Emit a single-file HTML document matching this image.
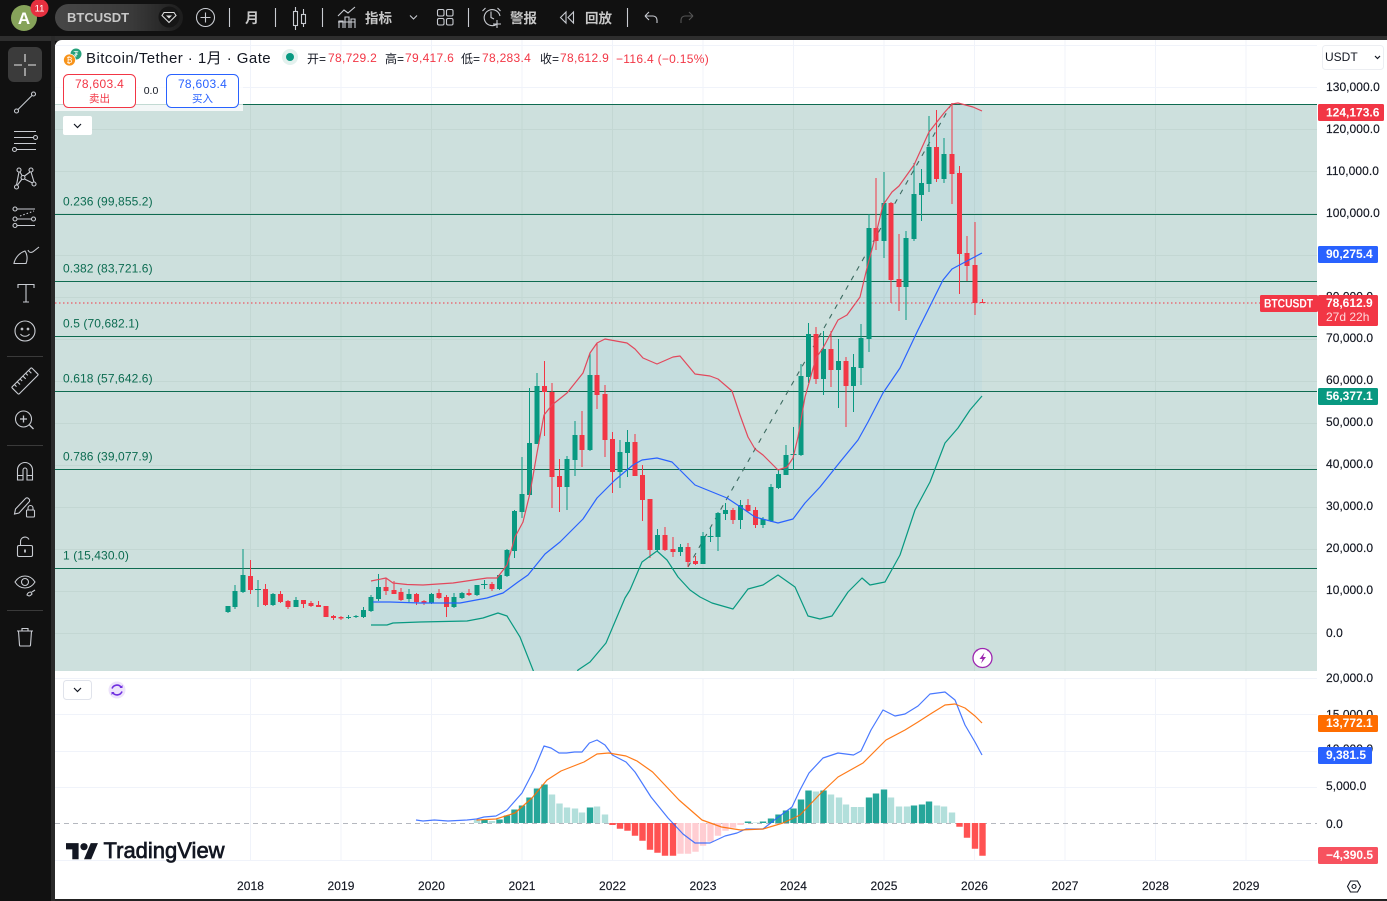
<!DOCTYPE html>
<html lang="zh"><head><meta charset="utf-8"><title>BTCUSDT</title>
<style>
html,body{margin:0;padding:0;background:#111;width:1387px;height:901px;overflow:hidden}
svg{display:block}
text{font-family:"Liberation Sans","Noto Sans CJK SC",sans-serif}
.ax text{font-size:12px;fill:#131722;letter-spacing:.05px;stroke:#131722;stroke-width:.15}
.fib text{font-size:12px;fill:#0b6b50;letter-spacing:.1px}
.tag text{font-size:12px;font-weight:bold;fill:#fff}
.ic{fill:none;stroke:#c9ccd2;stroke-width:1.1}
.top{font-size:13px;font-weight:bold;fill:#c8c8c8}
.ohlc{font-size:12px;letter-spacing:.3px;fill:#f23645}
.lb{font-size:12px;fill:#131722}
</style></head><body>
<svg width="1387" height="901" viewBox="0 0 1387 901" xmlns="http://www.w3.org/2000/svg">
<rect width="1387" height="901" fill="#111"/>
<rect y="36" width="1387" height="5" fill="#2e2e2e"/>
<rect x="51" y="36" width="4" height="865" fill="#2a2a2a"/>
<path d="M62 40H1387V901H55V47a7 7 0 0 1 7-7Z" fill="#fff"/>

<!-- white-zone grid -->
<path d="M250.5 40V104M341 40V104M431.5 40V104M522 40V104M612.5 40V104M703 40V104M793.5 40V104M884 40V104M974.5 40V104M1065 40V104M1155.5 40V104M1246 40V104M55 45.500H1317M55 87.500H1317" stroke="#f0f3fa" fill="none"/>
<!-- fib background -->
<rect x="55" y="104" width="1262" height="567" fill="#cde0dd"/>
<path d="M371 581L386 578 393 583 407 584.5 423 585 453 583 487 578 497 578 507 565 515 537 523 522 530 493 537 453 544 415 552 405 567 393 583 373 590 353 597 343 605 339 627 343 635 349 643 358 657 364 673 357 680 356 695 374 710 376 718 379 732 391 740 415 748 437 755 449 763 455 778 470 787 467 793 458 798 437 805 397 816 358 823 348 838 320 847 315 860 297 867 268 875 238 883 205 892 192 899 186 914 165 929 132 944 113 952 104 958 103 973 107 982 111V396L970 410 958 428 945 443 930 482 915 510 900 555 885 582 870 585 862 578 848 592 832 616 820 619 808 616 795 587 778 575 763 585 748 589 733 609 712 603 700 597 690 590 678 577 667 560 657 551 642 562 630 590 625 598 606 643 590 662 578 670H533L520 637 507 616 498 613 483 618 467 621 420 622 393 623 387 625 371 625Z" fill="#2196f3" fill-opacity=".04"/>

<!-- grid -->
<path d="M250.5 104V671M341 104V671M431.5 104V671M522 104V671M612.5 104V671M703 104V671M793.5 104V671M884 104V671M974.5 104V671M1065 104V671M1155.5 104V671M1246 104V671M55 129.5H1317M55 171.5H1317M55 213.5H1317M55 255.5H1317M55 297.5H1317M55 339.5H1317M55 381.5H1317M55 423.5H1317M55 465.5H1317M55 507.5H1317M55 549.5H1317M55 591.5H1317M55 633.5H1317" stroke="#8aa09c" stroke-opacity=".14" fill="none"/>

<!-- fib lines -->
<path d="M55 104.5H1317M55 214.5H1317M55 281.5H1317M55 336.5H1317M55 391.5H1317M55 469.5H1317M55 568.5H1317" stroke="#0e6b50" stroke-width="1" fill="none"/>
<g class="fib">
<text x="63" y="205.5">0.236 (99,855.2)</text>
<text x="63" y="272.5">0.382 (83,721.6)</text>
<text x="63" y="327.5">0.5 (70,682.1)</text>
<text x="63" y="382.5">0.618 (57,642.6)</text>
<text x="63" y="460.5">0.786 (39,077.9)</text>
<text x="63" y="559.5">1 (15,430.0)</text>
</g>

<!-- dashed diagonal -->
<path d="M688 567L952 103" stroke="#3c6a60" stroke-width="1.1" stroke-dasharray="5 6" fill="none"/>
<!-- price line -->
<path d="M55 303H1260" stroke="#f23645" stroke-dasharray="1.5 2.5" fill="none"/>

<!-- candles wicks green -->
<path fill="none" stroke="#089981" stroke-width="1" d="M228 606V613M235 585V609M243 549V593M258 580V607M273 593V606M296 597V607M348.5 615V619M356 615V618M363.5 607V618M371 595V612M378.5 574V601M409 589V602M431.5 593V604M454 593V608M462 592V599M477 585V596M484.5 580V589M499.5 574V590M507 549V577M514.5 510V558M522 457V518M529.5 388V495M537 373V444M567 456V510M575 421V476M590 353V451M620 440V488M627.5 430V477M657.5 529V552M680.5 544V556M703 532V564M710.5 527V542M718 512V551M725.5 503V520M740.5 500V529M763 517V528M771 484V522M778.5 470V489M786 445V475M793.5 427V470M801 364V456M808.5 323V383M823.5 331V395M838.5 339V408M853.5 354V412M861 324V385M869 214V352M884 172V258M906 231V320M914 163V241M921.5 169V221M929 116V192M944 138V183"/>
<!-- candles wicks red -->
<path fill="none" stroke="#f23645" stroke-width="1" d="M250.5 560V594M265.5 584V606M280.5 591V603M288 600V609M303.5 600V608M311 601V607M318.5 601V607M326 606V617M333.5 615V620M341 616V620M386 578V595M394 581V594M401 588V601M416.5 593V605M424 600V605M439 589V599M446.5 595V617M469 589V596M492 582V591M544.5 361V436M552 383V508M559.5 459V512M582 411V467M597 343V409M605 385V457M612.5 432V493M635 434V476M642.5 465V521M650 499V558M665 527V551M673 537V557M688 543V567M695.5 556V565M733 508V524M748 499V512M755.5 507V528M816 327V384M831 331V387M846 357V427M876 178V250M891 202V303M899 234V311M936.5 110V182M952 103V204M959.5 166V294M967 236V281M975 222V315M982.5 299V303"/>
<!-- candle bodies green -->
<path fill="none" stroke="#089981" stroke-width="5" d="M228 606V612M235 591V607M243 575V592M273 594V605M296 600V607M363.5 610V617M371 597V611M378.5 587V599M409 594V599M431.5 594V603M454 597V607M462 593V598M477 585V595M499.5 575V589M507 550V576M514.5 511V551M522 494V512M529.5 443V495M537 386V444M567 459V487M575 435V460M590 375V450M620 452V472M627.5 442V453M657.5 535V550M680.5 547V552M703 536V564M718 513V537M725.5 510V514M740.5 505V520M763 519V525M771 487V521M778.5 474V488M786 455V475M801 376V455M808.5 334V377M823.5 349V379M838.5 361V370M853.5 367V386M861 338V368M869 228V339M884 203V241M906 238V287M914 194V239M921.5 183V195M929 147V184M944 154V179M348.5 617V618M356 616V617"/>
<path fill="none" stroke="#089981" stroke-width="1" d="M255 589.5H261M707.5 536.5H713.5M481 584.5H487.5M790.5 454.5H796.5"/>
<!-- candle bodies red -->
<path fill="none" stroke="#f23645" stroke-width="5" d="M250.5 576V590M265.5 589V605M280.5 594V602M288 601V607M303.5 600V604M311 603V606M318.5 605V607M326 606V617M333.5 616V618M341 617V618.5M386 587V591M394 590V594M401 592V600M416.5 594V602M424 601V603M439 593V598M446.5 597V607M469 593V595M492 584V589M544.5 386V392M552 392V477M559.5 476V487M582 435V450M597 375V395M605 394V440M612.5 439V472M635 442V476M642.5 475V500M650 499V550M665 535V550M673 549V552M688 547V562M695.5 561V564M733 510V520M748 505V511M755.5 510V525M816 334V379M831 349V370M846 361V386M876 228V241M891 203V280M899 279V287M936.5 147V179M952 154V174M959.5 173V254M967 253V266M975 265V303"/>
<path fill="none" stroke="#f23645" stroke-width="1" d="M980 302.5H985.5"/>

<!-- Bollinger lines -->
<path fill="none" stroke="#e2485c" stroke-width="1.2" stroke-linejoin="round" d="M371 581L386 578 393 583 407 584.5 423 585 453 583 487 578 497 578 507 565 515 537 523 522 530 493 537 453 544 415 552 405 567 393 583 373 590 353 597 343 605 339 627 343 635 349 643 358 657 364 673 357 680 356 695 374 710 376 718 379 732 391 740 415 748 437 755 449 763 455 778 470 787 467 793 458 798 437 805 397 816 358 823 348 838 320 847 315 860 297 867 268 875 238 883 205 892 192 899 186 914 165 929 132 944 113 952 104 958 103 973 107 982 111"/>
<path fill="none" stroke="#2962ff" stroke-width="1.2" stroke-linejoin="round" d="M373 602L390 602 420 603 460 603 487 598 503 593 518 582 528 575 545 554 560 542 583 519 597 498 615 480 633 465 642 460 657 458 672 462 682 472 695 485 727 498 742 508 755 517 778 523 793 519 805 503 820 487 840 462 858 440 868 422 883 393 900 368 918 330 943 280 952 269 982 253"/>
<path fill="none" stroke="#089981" stroke-width="1.2" stroke-linejoin="round" d="M371 625L387 625 393 623 420 622 467 621 483 618 498 613 507 616 520 637 533 670 545 700M565 700L578 670 590 662 606 643 625 598 630 590 642 562 657 551 667 560 678 577 690 590 700 597 712 603 733 609 748 589 763 585 778 575 795 587 808 616 820 619 832 616 848 592 862 578 870 585 885 582 900 555 915 510 930 482 945 443 958 428 970 410 982 396"/>

<!-- chart top overlays -->
<rect x="55" y="75" width="188" height="36" fill="#fff" fill-opacity=".75"/>
<rect x="63.5" y="74.5" width="72" height="33" rx="5" fill="#fff" stroke="#f23645"/>
<rect x="166.5" y="74.5" width="72" height="33" rx="5" fill="#fff" stroke="#2962ff"/>
<text x="99.5" y="88" text-anchor="middle" style="font-size:12px;fill:#f23645;letter-spacing:.3px">78,603.4</text>
<text x="99.5" y="102" text-anchor="middle" style="font-size:10.5px;fill:#f23645">卖出</text>
<text x="202.5" y="88" text-anchor="middle" style="font-size:12px;fill:#2962ff;letter-spacing:.3px">78,603.4</text>
<text x="202.5" y="102" text-anchor="middle" style="font-size:10.5px;fill:#2962ff">买入</text>
<text x="151" y="94" text-anchor="middle" style="font-size:10.5px;fill:#131722">0.0</text>

<rect x="63" y="116" width="29" height="19" rx="2" fill="#fff"/>
<path d="M74 124l3.5 3.5 3.5-3.5" fill="none" stroke="#131722" stroke-width="1.2"/>

<!-- legend -->
<circle cx="76" cy="54" r="5.5" fill="#26a17b"/>
<text x="76" y="57" text-anchor="middle" style="font-size:8px;fill:#fff">₮</text>
<circle cx="69.5" cy="60" r="6" fill="#f7931a" stroke="#fff" stroke-width=".7"/>
<text x="69.5" y="63" text-anchor="middle" style="font-size:8px;fill:#fff">₿</text>
<text x="86" y="63" style="font-size:15px;fill:#131722;letter-spacing:.45px">Bitcoin/Tether · 1月 · Gate</text>
<circle cx="290" cy="57" r="8" fill="#e3f1ee"/><circle cx="290" cy="57" r="4" fill="#089981"/>
<text x="307" y="63" class="lb">开=</text><text x="328" y="62" class="ohlc">78,729.2</text>
<text x="385" y="63" class="lb">高=</text><text x="405" y="62" class="ohlc">79,417.6</text>
<text x="461" y="63" class="lb">低=</text><text x="482" y="62" class="ohlc">78,283.4</text>
<text x="540" y="63" class="lb">收=</text><text x="560" y="62" class="ohlc">78,612.9</text>
<text x="616" y="63" class="ohlc">−116.4 (−0.15%)</text>

<!-- lightning -->
<circle cx="982.5" cy="658" r="9.5" fill="#fff" stroke="#9c27b0" stroke-width="1.3"/>
<path d="M984.5 652.5l-5 6.5h3l-1.5 4.5 5-6.5h-3Z" fill="#9c27b0"/>
<path d="M976 650l1.5 1M989 650l-1.5 1" stroke="#9c27b0" fill="none"/>

<!-- MACD pane -->
<rect x="55" y="671" width="1262" height="190" fill="#fff"/>
<path d="M250.5 679V860M341 679V860M431.5 679V860M522 679V860M612.5 679V860M703 679V860M793.5 679V860M884 679V860M974.5 679V860M1065 679V860M1155.5 679V860M1246 679V860M55 678.5H1317M55 714.5H1317M55 751.5H1317M55 787.5H1317M55 860.5H1317" stroke="#f0f3fa" fill="none"/>
<path d="M55 823.5H1317" stroke="#b5b8bf" stroke-dasharray="5 4" fill="none"/>
<rect x="63.5" y="680.5" width="28" height="19" rx="3" fill="#fff" stroke="#e0e3eb"/>
<path d="M74 688l3.5 3.5 3.5-3.5" fill="none" stroke="#131722" stroke-width="1.2"/>
<circle cx="117" cy="690" r="8.5" fill="#ede3fb"/>
<path d="M112 688.5a5.3 5.3 0 0 1 9-1.5M122 691.5a5.3 5.3 0 0 1-9 1.5" fill="none" stroke="#6f2fe0" stroke-width="1.6"/>
<path d="M122.5 685v3h-3ZM111.5 695v-3h3Z" fill="#6f2fe0"/>

<!-- histogram pale green -->
<path fill="none" stroke="#b2dfdb" stroke-width="6.4" d="M477 823V820M492 823V821M552 823V794.5M559.5 823V803.5M567 823V807.5M575 823V808.5M582 823V812.5M597 823V806.5M605 823V814.5M756 823V822.5M816 823V791.5M831 823V794.5M839 823V797.5M846 823V804.5M854 823V807M861 823V807M891 823V797.5M899 823V806.5M907 823V806.5M937 823V805.5M944 823V806.5M952 823V812.5"/>
<!-- dark green -->
<path fill="none" stroke="#26a69a" stroke-width="6.4" d="M484.5 823V820M499.5 823V819.5M507 823V815.5M514.5 823V809.5M522 823V805.5M529.5 823V797.5M537 823V788.5M544.5 823V784.5M590 823V807.5M748 823V821.5M763 823V821.5M771 823V818.5M778.5 823V814.5M786 823V810.5M793.5 823V808.5M801 823V799.5M808.5 823V790.5M823.5 823V790.5M869 823V797.5M876 823V793.5M884 823V789.5M914 823V805.5M922 823V804.5M929 823V801.5"/>
<!-- red -->
<path fill="none" stroke="#ff5252" stroke-width="6.4" d="M612.5 823V825M620 823V828.7M627.5 823V830.7M635 823V835.7M642.5 823V840.7M650 823V849.7M657.5 823V852.7M665 823V855.7M673 823V855.7M959.5 823V826.7M967 823V837.7M975 823V848.7M982.5 823V855.7"/>
<!-- pale red -->
<path fill="none" stroke="#ffcdd2" stroke-width="6.4" d="M680.5 823V853.7M688 823V853.7M695.5 823V851.7M703 823V845.7M710.5 823V841.7M718 823V835.7M725.5 823V830.7M733 823V827.7M740.5 823V825"/>
<!-- MACD lines -->
<path fill="none" stroke="#2962ff" stroke-width="1.2" stroke-opacity=".85" stroke-linejoin="round" d="M416 820L423 821 434.4 820 448 821 467 820 476.5 819 484 817 496 816 507 810 522 793 534 770 544 746 551 748 559 753 566.5 753 574.5 752 582 752 589.4 743 597 740 605 745 612.4 755 626 762 635 772 651 797 668 818 683 834 695 843 710 843 725 836 737 833 746 829 763 829 777 818 792 807 800 790 809 773 823 758 838 753 853.5 755 861 751 871 730 883 710 895 716 905 714 918 706 930 694 945 692 955 700 965 725 975 742 982 755"/>
<path fill="none" stroke="#ff6d00" stroke-width="1.2" stroke-opacity=".9" stroke-linejoin="round" d="M476.5 820L496 819 515 813 532 798 547 780 561 771 584 762 597 754 608.6 753 626 756 637 761 652.6 772 679 800 702 820 721.5 827 740.6 830 763 829 783 823 800 815 821 793 838 777 863 763 886 740 905 730 918 722 932 713 945 705 955 704 965 708 975 716 982 723"/>

<!-- TV logo -->
<g transform="translate(66 839.5) scale(.9)" fill="#131722"><path d="M14 22H7V11H0V4h14v18ZM28 22h-8l7.5-18h8L28 22Z"/><circle cx="20" cy="8" r="4"/></g>
<text x="103.5" y="858" style="font-size:22px;fill:#131722;stroke:#131722;stroke-width:.7">TradingView</text>

<!-- time axis -->
<g class="ax" text-anchor="middle">
<text x="250.5" y="890">2018</text><text x="341" y="890">2019</text><text x="431.5" y="890">2020</text><text x="522" y="890">2021</text><text x="612.5" y="890">2022</text><text x="703" y="890">2023</text><text x="793.5" y="890">2024</text><text x="884" y="890">2025</text><text x="974.5" y="890">2026</text><text x="1065" y="890">2027</text><text x="1155.5" y="890">2028</text><text x="1246" y="890">2029</text>
</g>

<!-- price axis -->
<rect x="1317" y="40" width="70" height="860" fill="#fff"/>
<rect x="1322.5" y="45.5" width="61" height="24" rx="3" fill="#fff" stroke="#eceef2"/>
<text x="1325" y="61" style="font-size:12px;fill:#131722">USDT</text>
<path d="M1375 56l2.5 2.5 2.5-2.5" fill="none" stroke="#131722" stroke-width="1.2"/>
<g class="ax">
<text x="1326" y="91">130,000.0</text><text x="1326" y="133">120,000.0</text><text x="1326" y="175">110,000.0</text><text x="1326" y="217">100,000.0</text><text x="1326" y="300.5">80,000.0</text><text x="1326" y="342">70,000.0</text><text x="1326" y="384">60,000.0</text><text x="1326" y="426">50,000.0</text><text x="1326" y="468">40,000.0</text><text x="1326" y="510">30,000.0</text><text x="1326" y="552">20,000.0</text><text x="1326" y="594">10,000.0</text><text x="1326" y="637">0.0</text>
<text x="1326" y="682">20,000.0</text><text x="1326" y="718.5">15,000.0</text><text x="1326" y="753">10,000.0</text><text x="1326" y="790">5,000.0</text><text x="1326" y="828">0.0</text>
</g>
<g class="tag">
<rect x="1318" y="104" width="66" height="17" rx="1.5" fill="#f23645"/><text x="1326" y="116.5">124,173.6</text>
<rect x="1318" y="246" width="60" height="17" rx="1.5" fill="#2962ff"/><text x="1326" y="258">90,275.4</text>
<rect x="1260" y="295" width="58" height="17" rx="1.5" fill="#f23645"/><text x="1264" y="307.5" textLength="49" lengthAdjust="spacingAndGlyphs">BTCUSDT</text>
<rect x="1318" y="295" width="60" height="31" rx="1.5" fill="#f23645"/><text x="1326" y="307">78,612.9</text>
<text x="1326" y="321" style="font-weight:normal;fill:#ffd9dc">27d 22h</text>
<rect x="1318" y="388" width="60" height="17" rx="1.5" fill="#089981"/><text x="1326" y="400">56,377.1</text>
<rect x="1318" y="715" width="60" height="17" rx="1.5" fill="#ff6d00"/><text x="1326" y="727">13,772.1</text>
<rect x="1318" y="747" width="54" height="17" rx="1.5" fill="#2962ff"/><text x="1326" y="759">9,381.5</text>
<rect x="1318" y="847" width="60" height="17" rx="1.5" fill="#f7525f"/><text x="1326" y="859">−4,390.5</text>
</g>
<!-- settings hex -->
<path d="M1347.500 886.500l3-5.500h7l3 5.500-3 5.500h-7Z" fill="none" stroke="#131722" stroke-width="1.1"/><circle cx="1354" cy="886.500" r="2" fill="none" stroke="#131722" stroke-width="1.1"/>
<rect y="899" x="55" width="1332" height="2" fill="#222"/>

<!-- top bar -->
<circle cx="24" cy="18" r="13" fill="#86a35a"/><text x="24" y="24" text-anchor="middle" style="font-size:17px;font-weight:bold;fill:#fff">A</text>
<circle cx="39.5" cy="8" r="9" fill="#e5303f"/><text x="39.5" y="11.5" text-anchor="middle" style="font-size:9.5px;fill:#fff">11</text>
<defs><linearGradient id="p" x1="0" x2="1"><stop offset="0" stop-color="#474747"/><stop offset=".6" stop-color="#3a3a3a"/><stop offset="1" stop-color="#1d1d1d"/></linearGradient></defs>
<rect x="55" y="4" width="128" height="27" rx="13.5" fill="url(#p)"/>
<text x="67" y="22" class="top" style="font-size:13px">BTCUSDT</text>
<circle cx="169" cy="17" r="10.5" fill="#161616"/>
<path d="M164 12.500h10l2 3-7 7-7-7Z" fill="none" stroke="#ddd" stroke-width="1.1"/><path d="M166 15.500h6l-3 3Z" fill="#ddd"/>
<g class="ic" stroke-width="1.1">
<circle cx="205.5" cy="17.5" r="9"/><path d="M205.5 12.5v10M200.5 17.5h10"/>
<path d="M229.5 8v19M275.5 8v19M322.5 8v19M468.5 8v19M627.5 8v19"/>
<rect x="293.5" y="11.5" width="4" height="14"/><path d="M295.5 7v4.5M295.5 25.5V30"/>
<rect x="301.5" y="14.5" width="4" height="9"/><path d="M303.5 9v5.5M303.5 23.5V27"/>
<path d="M338 25h17M339 31v-7h4v7M345 31V20h4v11M351 31V22h4v9M338 19l6-6 4 3 7-6" transform="translate(0 -3)"/>
<path d="M410 15.5l3.5 3.5 3.5-3.5"/>
<rect x="437.5" y="9.5" width="6.5" height="6.5" rx="1.5"/><rect x="446.5" y="9.5" width="6.5" height="6.5" rx="1.5"/><rect x="437.5" y="18.5" width="6.5" height="6.5" rx="1.5"/><rect x="446.5" y="18.5" width="6.5" height="6.5" rx="1.5"/>
<path d="M497 24a8 8 0 1 1 3-8M491 11.5v6l3 1.5M482.5 11l3-3M497.5 8l3 3M497 20v8M493 24h8"/>
<path d="M566 12l-5.500 5.500 5.500 5.500ZM573.500 12l-5.500 5.500 5.500 5.500Z"/>
<path d="M645 16l4-4M645 16l4 4M645 16h8a4 4 0 0 1 4 4v3"/>
<path d="M693 16l-4-4M693 16l-4 4M693 16h-8a4 4 0 0 0-4 4v3" stroke="#555"/>
</g>
<text x="245" y="23" class="top" style="font-size:14px">月</text>
<text x="365" y="23" class="top" style="font-size:13.5px">指标</text>
<text x="510" y="23" class="top" style="font-size:13.5px">警报</text>
<text x="585" y="23" class="top" style="font-size:13.5px">回放</text>

<!-- left toolbar -->
<rect x="8" y="47" width="34" height="35" rx="6" fill="#3b3b3b"/>
<path d="M25 54v8M25 68v8M14 65h8M28 65h8" stroke="#e8e8e8" fill="none" stroke-width="1.1"/>
<path d="M7 356.5h36M7 445.5h36M7 610.5h36" stroke="#3a3a3a" fill="none"/>
<g class="ic">
<circle cx="16.5" cy="111" r="2"/><circle cx="33.5" cy="94" r="2"/><path d="M18 109.5L32 95.5"/>
<path d="M14 131.5h22M14 137.5h19M14 143.5h22M17 149.5h19"/><circle cx="35.5" cy="137.5" r="2"/><circle cx="14.5" cy="149.5" r="2"/>
<circle cx="19" cy="170" r="2"/><circle cx="31" cy="170" r="2"/><circle cx="23" cy="177.5" r="2"/><circle cx="16.5" cy="187" r="2"/><circle cx="34" cy="184" r="2"/>
<path d="M20 172l2 3.5M30 172l-5.500 4M17.500 185l4.500-6M19 172l-2.500 13M31 172l3 10M24.500 179l8 4"/>
<circle cx="15" cy="209" r="2"/><circle cx="15" cy="219" r="2"/><circle cx="33.500" cy="219" r="2"/><circle cx="15" cy="225.500" r="2"/>
<path d="M17.500 209H35M17 219H31.500M17.500 225.500H35"/><path d="M20 216l14-5" stroke-dasharray="1.500 2"/>
<path d="M14 263.500c1-6 6-11 11-12.500 2 3 3 8 1 12.500Z"/><path d="M28 250c1 3 4 3 6 1l5-4"/>
<path d="M18 288v-3.500h16v3.500M26 284.500v17.500M23 302h6"/>
<circle cx="25" cy="331" r="10"/><circle cx="22" cy="329" r=".8"/><circle cx="28" cy="329" r=".8"/><path d="M20.500 334c2 3 7 3 9 0"/>
<g transform="rotate(-45 25 381)"><rect x="11" y="376" width="28" height="10" rx="1"/><path d="M15 376v3M19 376v4M23 376v3M27 376v4M31 376v3M35 376v4"/></g>
<circle cx="23.500" cy="419" r="8"/><path d="M29.500 425l4 4M23.500 415.500v7M20 419h7" stroke-width="1.300"/>
<path d="M17.500 480v-10a7.500 7.500 0 0 1 15 0v10h-5.500v-10a2 2 0 0 0-4 0v10ZM17.500 475.500h5.500M27 475.500h5.500"/>
<path d="M14.500 514l1-5 10-10.500a2 2 0 0 1 3 0l.5.5a2 2 0 0 1 0 3l-10 11Z"/><rect x="26.500" y="510" width="8" height="7" rx="1"/><path d="M28 510v-2a2.500 2.500 0 0 1 5 0v2"/>
<rect x="17.500" y="545.500" width="15" height="11" rx="1.500"/><path d="M20.500 545.500v-4a4.500 4.500 0 0 1 8.500-2"/><path d="M25 549.500v3" stroke-width="1.800"/>
<path d="M15 582c5-8 15-8 20 0-5 8-15 8-20 0Z"/><circle cx="25" cy="582" r="3.500"/><path d="M27 595c.5-2 2-3 4-3l1 2c-1 1-2 2-3 2Z"/><path d="M32 592l3-2"/>
<path d="M17 631h16M22 631v-2.500h6v2.500M18.500 631l1 14a1 1 0 0 0 1 1h9a1 1 0 0 0 1-1l1-14"/>
</g>
</svg>
</body></html>
